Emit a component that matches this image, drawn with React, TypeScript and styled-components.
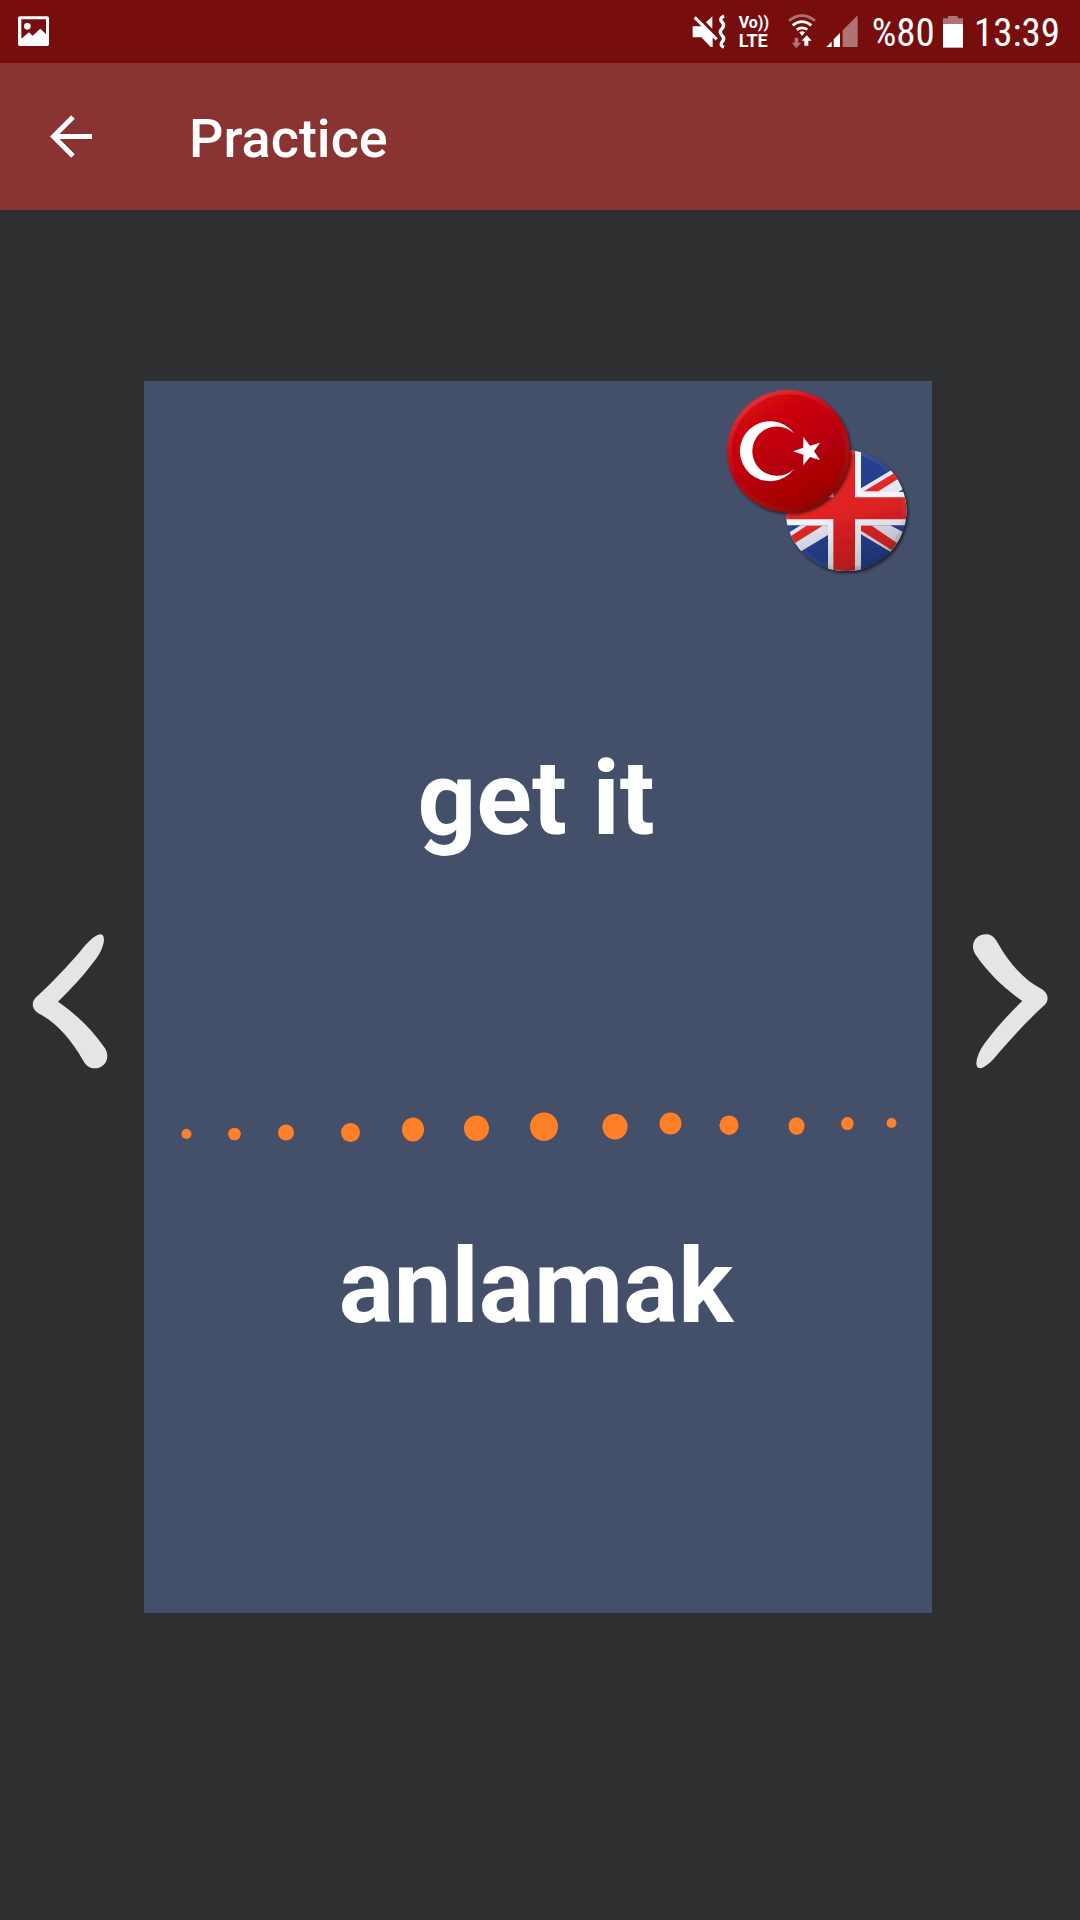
import React from "react";
import styled, { createGlobalStyle } from "styled-components";

const GlobalStyle = createGlobalStyle`
  *, *::before, *::after { box-sizing: border-box; }
  body { margin: 0; background: #2d2f31; font-family: Roboto, "Noto Sans", sans-serif; color: #fff; }
`;

const Screen = styled.div`
  min-height: 100vh;
  display: flex;
  flex-direction: column;
`;

const StatusBar = styled.div`
  height: 63px;
  padding: 0 20px 0 18px;
  display: flex;
  align-items: center;
  justify-content: space-between;
  background: #770d0d;
`;

const StatusGroup = styled.div`
  display: flex;
  align-items: center;
`;

const Glyph = styled.svg<{ $w: number; $gap?: number }>`
  display: block;
  flex: none;
  width: ${(p) => p.$w}px;
  height: 63px;
  margin-right: ${(p) => p.$gap ?? 0}px;
`;

const StatusText = styled.span<{ $gap?: number }>`
  font-family: "Roboto Condensed", Roboto, sans-serif;
  font-size: 39px;
  line-height: 63px;
  padding-top: 3px;
  margin-right: ${(p) => p.$gap ?? 0}px;
`;

const VoLte = styled.span`
  display: flex;
  flex-direction: column;
  width: 32px;
  margin-right: 17px;
  font-weight: 700;
  font-size: 18px;
  line-height: 18px;
`;

const VoLine = styled.span`
  font-size: 16px;
`;

const AppBar = styled.header`
  height: 147px;
  padding: 0 40px;
  display: flex;
  align-items: center;
  background: #893333;
`;

const BackButton = styled.button`
  width: 64px;
  height: 64px;
  padding: 0;
  border: 0;
  background: none;
  margin-right: 85px;
  cursor: pointer;
`;

const BackIcon = styled.svg`
  display: block;
  width: 64px;
  height: 64px;
`;

const Title = styled.h1`
  margin: 0;
  font-size: 54px;
  font-weight: 500;
  line-height: 64px;
  padding-top: 4px;
`;

const Stage = styled.main`
  flex: 1;
  display: grid;
  grid-template-columns: 144px 1fr 148px;
  align-items: center;
  align-content: start;
  padding: 171px 0;
`;

const NavButton = styled.button`
  padding: 0;
  border: 0;
  background: none;
  cursor: pointer;
`;

const NavIcon = styled.svg`
  display: block;
  width: 144px;
  height: 168px;
`;

const Card = styled.article`
  position: relative;
  display: flex;
  flex-direction: column;
  padding: 356px 0 264px;
  background: #444f6a;
`;

const Flags = styled.svg`
  position: absolute;
  top: 0;
  right: 0;
  width: 222px;
  height: 200px;
`;

const Word = styled.p`
  margin: 0;
  padding-right: 4px;
  font-size: 103px;
  font-weight: 700;
  line-height: 124px;
  text-align: center;
`;

const Dots = styled.svg`
  display: block;
  width: 100%;
  margin: 245px 0 79px;
`;

const DOTS = [
  [42.5, 28, 5, 5],
  [90.5, 28, 6.3, 6.3],
  [142, 26.5, 8, 8],
  [206.5, 26.5, 9.5, 9.5],
  [269, 23.5, 11, 12],
  [332.5, 22.3, 12.5, 12.8],
  [400, 20.6, 14, 14.2],
  [471, 20.6, 12.6, 12.8],
  [526.5, 17.5, 11, 11],
  [585, 19.2, 9.5, 9.7],
  [652.6, 20, 8, 8.8],
  [703.4, 17.6, 6.3, 6.5],
  [747.5, 17, 5, 5],
];

const CHEVRON =
  "M240 43C252 43 254 55 250 72C244 95 232 112 220 127C190 168 152 208 114 245C168 282 216 328 255 385C273 415 254 445 224 445C208 445 198 437 189 421C150 352 105 305 55 280C34 266 34 246 48 232C100 185 140 140 180 95C200 70 222 46 240 43Z";

const StatusIcons = () => (
  <StatusGroup>
    <Glyph $w={36} $gap={11} viewBox="0 0 108 189" aria-label="Muted" fill="#fff">
      <path d="M2 79H32L62 108V141H56L28 112H2ZM42 67L61 49V86Z" />
      <path d="M8 52L74 118" stroke="#fff" strokeWidth="9" />
      <path d="M96 48Q80 56 90 66T90 86T90 106T90 126Q82 136 96 142" fill="none" stroke="#fff" strokeWidth="10" />
    </Glyph>
    <VoLte>
      <VoLine>Vo))</VoLine>
      <span>LTE</span>
    </VoLte>
    <Glyph $w={28} $gap={9} viewBox="0 0 84 189" aria-label="Wi-Fi" fill="none" stroke="#fff" strokeWidth="8">
      <path d="M3 62Q42 32 81 62" opacity=".42" />
      <path d="M14 76Q42 54 70 76" />
      <path d="M26 89Q42 78 58 89" />
      <path d="M34 97Q42 91 51 97L42 108Z" fill="#fff" stroke="none" />
      <path d="M20 113H31V128H40L25 145L11 128H20Z" fill="#fff" stroke="none" opacity=".42" />
      <path d="M56 106L71 122H61V137H49V122H41Z" fill="#fff" stroke="none" />
    </Glyph>
    <Glyph $w={33} $gap={14} viewBox="0 0 99 189" aria-label="Signal" fill="#fff">
      <path d="M4 141L20 125V141ZM26 141V118L45 99V141Z" />
      <path d="M53 141V91L98 46V141Z" opacity=".42" />
    </Glyph>
    <StatusText $gap={8}>%80</StatusText>
    <Glyph $w={20} $gap={11} viewBox="0 0 60 189" aria-label="Battery" fill="#fff">
      <path d="M0 55H15V48H44V55H60V72H0Z" opacity=".42" />
      <path d="M0 72H60V143H0Z" />
    </Glyph>
    <StatusText>13:39</StatusText>
  </StatusGroup>
);

const FlagPair = () => (
  <Flags viewBox="0 33 666 600" aria-label="Turkish and English">
    <defs>
      <linearGradient id="red" x1=".2" y1="0" x2=".75" y2="1">
        <stop offset="0" stopColor="#dd0814" />
        <stop offset="1" stopColor="#990000" />
      </linearGradient>
      <linearGradient id="shade" x1=".3" y1="0" x2=".6" y2="1">
        <stop offset=".5" stopColor="#000" stopOpacity="0" />
        <stop offset="1" stopColor="#000" stopOpacity=".22" />
      </linearGradient>
      <linearGradient id="rim" x1=".2" y1="0" x2=".8" y2="1">
        <stop offset="0" stopColor="#fff" stopOpacity=".16" />
        <stop offset=".5" stopColor="#fff" stopOpacity="0" />
        <stop offset="1" stopColor="#000" stopOpacity=".2" />
      </linearGradient>
      <filter id="drop" x="-20%" y="-20%" width="140%" height="140%">
        <feDropShadow dx="5" dy="6" stdDeviation="4" floodColor="#000" floodOpacity=".6" />
      </filter>
      <clipPath id="round">
        <circle cx="408" cy="422" r="181" />
      </clipPath>
    </defs>
    <g filter="url(#drop)">
      <g clipPath="url(#round)">
        <path fill="#26418f" d="M220 230H600V610H220Z" />
        <path fill="#e6e7f3" d="M453 355L600 267V345L565 366H453ZM453 466H540L600 497V581L453 493ZM354 466H272L220 498V576L354 495Z" />
        <path fill="#e32726" d="M462 364L600 281V304L505 364ZM453 467H485L600 545V575L453 482ZM338 467L220 541V513L290 467Z" />
        <path fill="#f4f5fa" d="M354 230H453V366H600V466H453V610H354V466H220V366H354Z" />
        <path fill="#e02123" d="M370 230H435V382H600V448H435V610H370V448H220V382H370Z" />
        <circle cx="408" cy="422" r="181" fill="url(#shade)" />
        <circle cx="408" cy="422" r="175" fill="none" stroke="url(#rim)" strokeWidth="12" />
      </g>
    </g>
    <circle cx="235" cy="243" r="184" fill="url(#red)" filter="url(#drop)" />
    <circle cx="235" cy="243" r="177" fill="none" stroke="url(#rim)" strokeWidth="14" />
    <path fill="#fff" d="M252 190A90 90 0 1 0 252 297A74 74 0 1 1 252 190Z" />
    <path fill="#fff" d="M249 244L280 233V201L300 227L330 218L312 244L330 270L300 261L280 286V254Z" />
  </Flags>
);

export default function App() {
  return (
    <Screen>
      <GlobalStyle />
      <StatusBar>
        <Glyph $w={31} viewBox="0 0 93 189" aria-label="Picture" fill="#fff">
          <path
            fillRule="evenodd"
            d="M6 49H87Q93 49 93 55V132Q93 138 87 138H6Q0 138 0 132V55Q0 49 6 49ZM10 58V116L33 97L44 107L67 86L84 102V58Z"
          />
          <circle cx="28" cy="79" r="10" />
        </Glyph>
        <StatusIcons />
      </StatusBar>
      <AppBar>
        <BackButton aria-label="Back">
          <BackIcon viewBox="0 0 64 64" fill="none" stroke="#fff" strokeWidth="5">
            <path d="M52 31.500H14M33 12L13.500 31.500L33 51" />
          </BackIcon>
        </BackButton>
        <Title>Practice</Title>
      </AppBar>
      <Stage>
        <NavButton aria-label="Previous word">
          <NavIcon viewBox="0 0 144 168">
            <path fill="#e5e5e5" transform="translate(20 7) scale(.33333)" d={CHEVRON} />
          </NavIcon>
        </NavButton>
        <Card>
          <FlagPair />
          <Word lang="en">get it</Word>
          <Dots viewBox="0 0 788 40" aria-hidden="true">
            {DOTS.map(([cx, cy, rx, ry]) => (
              <ellipse key={cx} cx={cx} cy={cy} rx={rx} ry={ry} fill="#ff8029" />
            ))}
          </Dots>
          <Word lang="tr">anlamak</Word>
        </Card>
        <NavButton aria-label="Next word">
          <NavIcon viewBox="0 0 144 168">
            <path fill="#e5e5e5" transform="translate(8 7) scale(.33333) rotate(180 180.500 244)" d={CHEVRON} />
          </NavIcon>
        </NavButton>
      </Stage>
    </Screen>
  );
}
